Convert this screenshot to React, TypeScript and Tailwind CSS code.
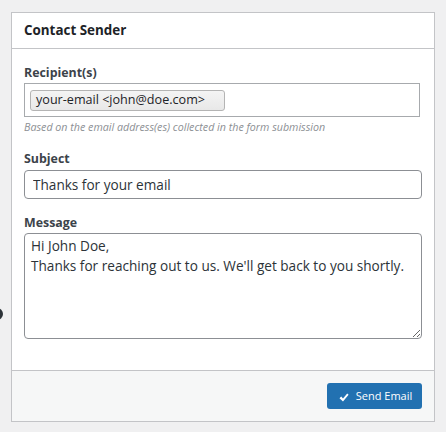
export default function App() {
    return (
        <div className="relative min-h-[432px] w-[446px] bg-[#f0f0f1] pl-[11px] pt-[12px] pr-[11px] font-['Open_Sans',sans-serif] text-[#1d2327]">
            <div className="absolute left-[-9px] top-[308px] h-[12px] w-[12px] rounded-full bg-[#2c3338]" />
            <div className="w-[424px] border border-[#c3c4c7] bg-white">
                <div className="flex h-[36px] items-center border-b border-[#c3c4c7] px-[12px]">
                    <h2 className="text-[13.4px] font-bold">Contact Sender</h2>
                </div>

                <div className="px-[12px] pt-[15px] pb-[31px]">
                    <label className="block text-[12.4px] font-bold leading-[18px] text-[#3c434a]">Recipient(s)</label>
                    <div className="mt-[1px] flex h-[34px] w-[396px] items-center border border-[#a7aaad] px-[5px]">
                        <span className="flex h-[21px] w-[195px] items-center rounded-[3px] border border-[#b4b4b4] bg-gradient-to-b from-[#f4f4f4] to-[#e8e8e8] px-[5px] text-[12.6px] leading-none text-[#1d2327]">
                            your-email &lt;john@doe.com&gt;
                        </span>
                    </div>
                    <p className="mt-[3px] text-[10.7px] italic leading-[14px] text-[#8c8f94]">
                        Based on the email address(es) collected in the form submission
                    </p>

                    <label className="mt-[16px] block text-[12.4px] font-bold leading-[18px] text-[#3c434a]">Subject</label>
                    <input
                        type="text"
                        defaultValue="Thanks for your email"
                        className="mt-[2px] block h-[29px] w-[398px] rounded-[4px] border border-[#8c8f94] px-[8px] text-[13.6px] text-[#2c3338] outline-none"
                    />

                    <label className="mt-[15px] block text-[12.4px] font-bold leading-[18px] text-[#3c434a]">Message</label>
                    <textarea
                        defaultValue={"Hi John Doe,\nThanks for reaching out to us. We'll get back to you shortly."}
                        className="mt-[1px] block h-[106px] w-[398px] resize-y rounded-[4px] border border-[#8c8f94] px-[6px] py-[2px] text-[13.6px] leading-[20px] text-[#2c3338] outline-none"
                    />
                </div>

                <div className="flex h-[51px] items-center justify-end border-t border-[#c3c4c7] bg-[#f6f7f7] px-[12px]">
                    <button className="flex h-[26px] w-[95px] items-center justify-center gap-[7px] rounded-[3px] bg-[#2271b1] pl-[2px] text-[11px] text-white">
                        <svg width="10" height="9" viewBox="0 0 10 9" className="mt-[2px]">
                            <path d="M0.5 5.2 L2.2 3.6 L4 5.4 L8.2 0.5 L9.6 1.8 L4 8.5 Z" fill="white" />
                        </svg>
                        Send Email
                    </button>
                </div>
            </div>
        </div>
    );
}
